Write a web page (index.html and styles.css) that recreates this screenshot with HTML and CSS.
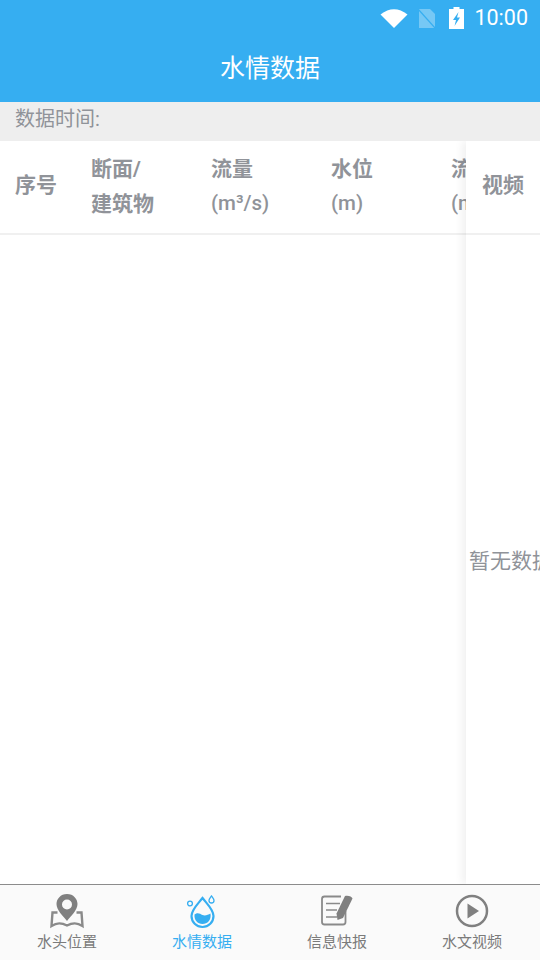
FILE: index.html
```html
<!DOCTYPE html>
<html lang="zh">
<head>
<meta charset="utf-8">
<title>水情数据</title>
<link rel="stylesheet" href="styles.css">
</head>
<body>
<div class="app">
  <header class="appbar">
    <div class="status">
      <svg class="st-wifi" width="28" height="20" viewBox="0 0 28 20"><path d="M14 20 L0.5 6.5 Q14 -4 27.5 6.5 Z" fill="#fff"/></svg>
      <svg class="st-sim" width="18" height="20" viewBox="0 0 18 20"><path d="M1 1 H12 L17 6 V20 H1 Z" fill="#fff" fill-opacity=".32"/><path d="M0 1 L17 20" stroke="#36aef1" stroke-width="1.2"/></svg>
      <svg class="st-bat" width="15" height="22" viewBox="0 0 15 22"><path d="M4.500 0 H10.500 V2 H15 V22 H0 V2 H4.500 Z" fill="#fff"/><path d="M9.500 5 L4 13 H7 L5.500 19 L11 10.500 H8 Z" fill="#36aef1"/></svg>
      <span class="st-time">10:00</span>
    </div>
    <h1 class="title">水情数据</h1>
  </header>
  <div class="timebar">数据时间:</div>
  <main class="table">
    <div class="thead">
      <div class="th th-no">序号</div>
      <div class="th th-name">断面/<br>建筑物</div>
      <div class="th th-col">流量<br><span class="unit">(m³/s)</span></div>
      <div class="th th-col">水位<br><span class="unit">(m)</span></div>
      <div class="th th-col">流速<br><span class="unit">(m/s)</span></div>
    </div>
    <div class="tbody"></div>
    <aside class="fixed">
      <div class="fixed-head">视频</div>
      <div class="fixed-body"><span class="empty">暂无数据</span></div>
    </aside>
  </main>
  <nav class="tabs">
    <div class="tab">
      <svg class="ico" width="36" height="36" viewBox="0 0 36 36">
        <path fill="#808080" fill-rule="evenodd" d="M18 1 C11.500 1 7.500 6 7.500 11 C7.500 17 14 23 18 28 C22 23 28.500 17 28.500 11 C28.500 6 24.500 1 18 1 Z M18 6.500 A5 5 0 1 1 18 16.500 A5 5 0 1 1 18 6.500 Z"/>
        <path fill="none" stroke="#8a8a8a" stroke-width="2.400" d="M8.500 19.500 H3.500 L2.500 33 C8 29.500 12 29.500 18 32.500 C24 29.500 28 29.500 33.500 33 L32.500 19.500 H27.500"/>
      </svg>
      <span class="label">水头位置</span>
    </div>
    <div class="tab active">
      <svg class="ico" width="36" height="36" viewBox="0 0 36 36">
        <path fill="none" stroke="#36aef1" stroke-width="2.200" d="M18.500 5 C14 11 7.500 16.500 7.500 23 A11 11 0 0 0 29.500 23 C29.500 16.500 23 11 18.500 5 Z"/>
        <path fill="#36aef1" d="M10.500 21.500 C14 19 16 21 18.500 22 C21 23 24 22 26.500 20.500 C27.500 27 23.500 31 18.500 31 C13.500 31 10 27 10.500 21.500 Z"/>
        <circle cx="6" cy="10.500" r="2.400" fill="none" stroke="#36aef1" stroke-width="1.300"/>
        <path fill="none" stroke="#36aef1" stroke-width="1.300" d="M27.500 3 C26 5 25 6 25 7.500 A2.500 2.500 0 0 0 30 7.500 C30 6 29 5 27.500 3 Z"/>
      </svg>
      <span class="label">水情数据</span>
    </div>
    <div class="tab">
      <svg class="ico" width="36" height="36" viewBox="0 0 36 36">
        <path fill="none" stroke="#8a8a8a" stroke-width="1.800" d="M22 3.500 H5.500 Q3 3.500 3 6 V29 Q3 31.500 5.500 31.500 H24 Q26.500 31.500 26.500 29 V18"/>
        <path fill="none" stroke="#8a8a8a" stroke-width="1.300" d="M7 10.500 H21 M7 17 H18 M7 24 H18"/>
        <path fill="#808080" d="M26 3 C29 2 33 3.500 33.500 5.500 L24 25 L18.500 27 L17.500 20.500 Z"/>
      </svg>
      <span class="label">信息快报</span>
    </div>
    <div class="tab">
      <svg class="ico" width="36" height="36" viewBox="0 0 36 36">
        <circle cx="18" cy="18" r="15" fill="none" stroke="#808080" stroke-width="2.500"/>
        <path fill="#808080" d="M13.500 10.500 L25 18 L13.500 25.500 Z"/>
      </svg>
      <span class="label">水文视频</span>
    </div>
  </nav>
</div>
</body>
</html>
```

FILE: styles.css
```css
* { box-sizing: border-box; margin: 0; padding: 0; }
html, body { width: 540px; height: 960px; overflow: hidden; background: #fff; }
body { font-family: Roboto, "Noto Sans CJK SC", sans-serif; }
.app { display: flex; flex-direction: column; width: 540px; height: 960px; }

.appbar { flex: none; height: 102px; background: #36aef1; color: #fff; display: flex; flex-direction: column; }
.status { height: 36px; display: flex; align-items: center; justify-content: flex-end; padding-right: 12px; }
.st-wifi { margin-right: 10px; }
.st-sim { margin-right: 13px; }
.st-bat { margin-right: 10px; }
.st-time { font-size: 21.5px; line-height: 38px; }
.title { flex: 1; text-align: center; font-size: 25px; font-weight: 400; line-height: 65px; }

.timebar { flex: none; height: 39px; background: #eeeeee; color: #909399; font-size: 20px; line-height: 34px; padding-left: 15px; }

.table { flex: 1; position: relative; overflow: hidden; display: flex; flex-direction: column; background: #fff; }
.thead { flex: none; height: 94px; display: flex; align-items: center; border-bottom: 2px solid #f0f0f0; color: #909399; font-size: 21px; font-weight: 700; line-height: 35px; white-space: nowrap; }
.th { flex: none; padding-left: 14px; }
.th-no { width: 77px; margin-bottom: 3px; padding-left: 15px; }
.th-name { width: 120px; }
.th-col { width: 120px; }
.unit { font-weight: 500; font-size: 20.5px; position: relative; top: -1px; }
.tbody { flex: 1; }

.fixed { position: absolute; top: 0; right: 0; bottom: 0; width: 74px; background: #fff; box-shadow: -4px 0 8px rgba(0, 0, 0, .06); display: flex; flex-direction: column; }
.fixed-head { flex: none; height: 94px; border-bottom: 2px solid #f0f0f0; padding-left: 16px; color: #909399; font-size: 21px; font-weight: 700; line-height: 88px; }
.fixed-body { flex: 1; overflow: hidden; display: flex; align-items: center; padding-left: 3px; padding-bottom: 2px; }
.empty { flex: none; font-size: 21px; color: #909399; white-space: nowrap; }

.tabs { flex: none; height: 76px; background: #fafafa; border-top: 1px solid #8c8c8c; display: flex; }
.tab { flex: 1; display: flex; flex-direction: column; align-items: center; padding-top: 8px; padding-right: 1px; color: #7b7b7b; }
.tab .ico { flex: none; }
.tab .label { font-size: 15px; line-height: 20px; margin-top: 3px; }
.tab.active { color: #36aef1; }
```
